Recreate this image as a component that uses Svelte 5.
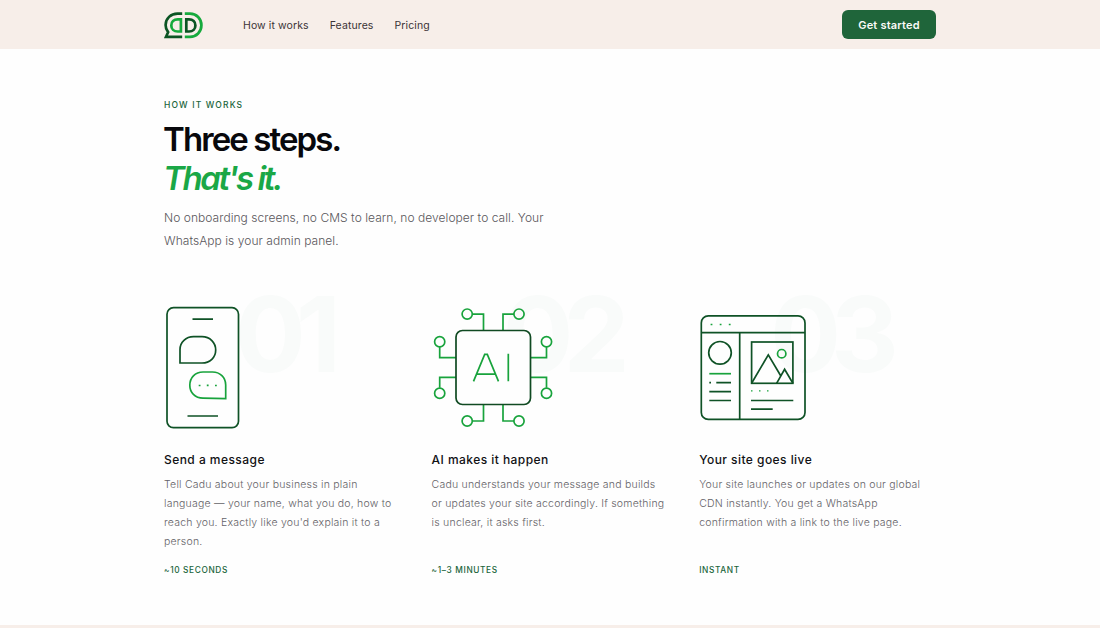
<script lang="ts">
	const links = ['How it works', 'Features', 'Pricing'];

	const steps = [
		{
			num: '01',
			icon: 'phone',
			title: 'Send a message',
			lines: [
				'Tell Cadu about your business in plain',
				'language — your name, what you do, how to',
				"reach you. Exactly like you'd explain it to a",
				'person.'
			],
			time: '~10 seconds'
		},
		{
			num: '02',
			icon: 'chip',
			title: 'AI makes it happen',
			lines: [
				'Cadu understands your message and builds',
				'or updates your site accordingly. If something',
				'is unclear, it asks first.'
			],
			time: '~1–3 minutes'
		},
		{
			num: '03',
			icon: 'site',
			title: 'Your site goes live',
			lines: [
				'Your site launches or updates on our global',
				'CDN instantly. You get a WhatsApp',
				'confirmation with a link to the live page.'
			],
			time: 'Instant'
		}
	];
</script>

<header class="nav">
	<div class="container nav-inner">
		<svg class="logo" viewBox="0 0 40 28" width="40" height="28" fill="none" stroke-width="2.7">
			<path d="M18.2 2.6H13.5C6.8 2.6 1.6 7.6 1.6 14C1.6 17 2.5 19.2 4.1 21.2L2 25.8H18.2" stroke="#0b5423" />
			<path d="M20.8 2.6H26C32.5 2.6 37.4 7.7 37.4 14.2S32.5 25.8 26 25.8H20.8" stroke="#16aa3d" />
			<path d="M16.9 8.4H13.7C9.8 8.4 7.3 10.8 7.3 14.4S9.8 20.5 13.7 20.5H16.9Z" stroke="#16aa3d" />
			<path d="M22.3 8.4H25C28.9 8.4 31.4 10.8 31.4 14.4S28.9 20.5 25 20.5H22.3Z" stroke="#0b5423" />
		</svg>
		<nav>
			{#each links as link}
				<a href="#{link}">{link}</a>
			{/each}
		</nav>
		<button class="cta">Get started</button>
	</div>
</header>

<main class="how">
	<div class="container">
		<p class="eyebrow">How it works</p>
		<h2>Three steps.<br /><em>That's it.</em></h2>
		<p class="lead">No onboarding screens, no CMS to learn, no developer to call. Your<br />WhatsApp is your admin panel.</p>

		<div class="steps">
			{#each steps as step}
				<article class="step">
					<span class="num">{step.num}</span>
					{#if step.icon === 'phone'}
						<svg class="icon" viewBox="0 0 124 124" fill="none" stroke="#0f5226" stroke-width="1.7">
							<rect x="3" y="2.7" width="71.5" height="120" rx="6.5" fill="#fefefe" />
							<path d="M28.5 14.2H49M23.5 111H54" />
							<path d="M16 58V44.5C16 37 22 31.7 29.5 31.7H38C46 31.7 51.7 37.5 51.7 45S46 58 38 58Z" />
							<path d="M61.7 93.6V80C61.7 72.5 56 67 48.5 67H39C31 67 25.8 73 25.8 80.2S31 93 39 93.2Z" stroke="#18a33c" />
							<path d="M34.7 80.5h1.8M42.8 80.3h1.8M51 80.5h1.8" stroke="#18a33c" />
						</svg>
					{:else if step.icon === 'chip'}
						<svg class="icon" viewBox="0.5 0.2 124 124" fill="none" stroke="#18a33c" stroke-width="1.7">
							<path d="M41 9.3H52V26M82.5 9.3H71.5V26M41 116.2H52V99M82.5 116.2H71.5V99" />
							<path d="M8.2 42V52.8H25M8.2 83V72.5H25M115 42V52.8H99M115 83V72.5H99" />
							<circle cx="35.7" cy="9.3" r="5.1" />
							<circle cx="87.5" cy="9.3" r="5.1" />
							<circle cx="35.7" cy="116.2" r="5.1" />
							<circle cx="87.5" cy="116.2" r="5.1" />
							<circle cx="8.2" cy="37" r="5.1" />
							<circle cx="8.2" cy="88.5" r="5.1" />
							<circle cx="115" cy="37" r="5.1" />
							<circle cx="115" cy="88.5" r="5.1" />
							<rect x="24.5" y="25.7" width="74.5" height="74" rx="6.5" stroke="#104a22" fill="#fefefe" />
							<path d="M42 76.5L53.2 49.5H55.8L67 76.5M45.7 69.3H63.5M76.8 49V76.5" />
						</svg>
					{:else}
						<svg class="icon" viewBox="0 0 124 124" fill="none" stroke="#0f5226" stroke-width="1.7">
							<rect x="2.3" y="10.9" width="103.7" height="103.5" rx="7" />
							<path d="M2.3 27.7H106M40.7 27.7V114.4" />
							<path d="M11.6 19.5h1.8M20.7 19.5h1.8M29.8 19.5h1.8" stroke="#18a33c" />
							<circle cx="21" cy="47.8" r="11.3" />
							<path d="M10.3 68.7H32" stroke="#18a33c" />
							<path d="M10.3 77.6h1.7M17.3 77.6H32M10.3 86.6H32M10.3 95.5H32M52 95.5H94.3M52 104.2H73.7" />
							<rect x="52.6" y="37" width="41.3" height="41.3" />
							<path d="M52.6 78.3L69.3 49.8L82 71.2M77.6 78.3L85.6 64.3L93.9 78.3" />
							<circle cx="82.7" cy="48.7" r="4.2" stroke="#18a33c" />
							<path d="M52 85.9h1.5M60 85.9h1.5M68 85.9h1.5" stroke="#18a33c" stroke-width="1.3" />
						</svg>
					{/if}
					<h3>{step.title}</h3>
					<p class="desc">
						{#each step.lines as line}<span>{line}</span>{/each}
					</p>
					<p class="time">{step.time}</p>
				</article>
			{/each}
		</div>
	</div>
</main>

<style>
	:global(body) {
		margin: 0;
		background: #fefefe;
		font-family: Inter, 'Open Sans', sans-serif;
		overflow: hidden;
	}

	.container {
		width: 772px;
		margin: 0 auto;
	}

	.nav {
		height: 49px;
		background: #f7eee9;
	}

	.nav-inner {
		display: flex;
		align-items: center;
		height: 49px;
	}

	.logo {
		margin-right: 39px;
	}

	nav {
		display: flex;
		gap: 21px;
		flex: 1;
		padding-top: 1px;
	}

	nav a {
		color: #3b3336;
		font-size: 10.5px;
		letter-spacing: 0.1px;
		text-decoration: none;
	}

	.cta {
		width: 94px;
		height: 29px;
		padding: 0;
		border: 0;
		border-radius: 6px;
		background: #1f653a;
		color: #fbfbf8;
		font: 600 11px Inter, sans-serif;
		letter-spacing: 0.2px;
	}

	.how {
		box-sizing: border-box;
		height: 579px;
		padding-top: 50px;
		border-bottom: 3px solid #f7eee9;
	}

	p,
	h2,
	h3 {
		margin: 0;
	}

	.eyebrow {
		color: #20653b;
		font-size: 8.5px;
		font-weight: 500;
		line-height: 13px;
		letter-spacing: 1.15px;
		text-transform: uppercase;
	}

	h2 {
		margin: 8px 0 0 -1px;
		color: #08080c;
		font-size: 33px;
		font-weight: 600;
		line-height: 39px;
		letter-spacing: -1.9px;
	}

	h2 em {
		color: #1aa746;
		letter-spacing: -2.4px;
	}

	.lead {
		margin-top: 9px;
		color: #59565b;
		font-size: 12px;
		font-weight: 300;
		line-height: 22.5px;
		letter-spacing: 0.05px;
		white-space: nowrap;
	}

	.steps {
		display: grid;
		grid-template-columns: repeat(3, 236.6px);
		column-gap: 31px;
		margin-top: 53px;
	}

	.step {
		position: relative;
		display: flex;
		flex-direction: column;
		height: 271px;
	}

	.num {
		position: absolute;
		top: -10.5px;
		left: 71px;
		z-index: -1;
		color: #f9fbfa;
		font-size: 105px;
		font-weight: 700;
		line-height: 78px;
		letter-spacing: -10px;
	}

	.icon {
		width: 124px;
		height: 124px;
	}

	h3 {
		margin-top: 21px;
		color: #111114;
		font-size: 12px;
		font-weight: 500;
		line-height: 19px;
		letter-spacing: 0.45px;
	}

	.desc {
		margin-top: 6px;
		color: #646267;
		font-size: 10.5px;
		font-weight: 300;
		line-height: 19px;
		letter-spacing: 0.22px;
		white-space: nowrap;
	}

	.desc span {
		display: block;
	}

	.time {
		margin-top: auto;
		color: #20653b;
		font-size: 8.3px;
		font-weight: 500;
		line-height: 12px;
		letter-spacing: 0.63px;
		text-transform: uppercase;
	}
</style>
